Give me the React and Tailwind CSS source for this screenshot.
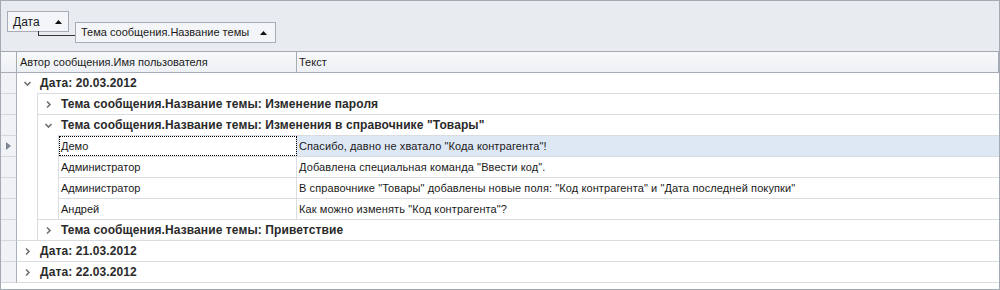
import React from 'react';

const tree = [
    {
        label: 'Дата: 20.03.2012',
        open: true,
        children: [
            { label: 'Тема сообщения.Название темы: Изменение пароля' },
            {
                label: 'Тема сообщения.Название темы: Изменения в справочнике "Товары"',
                open: true,
                rows: [
                    { author: 'Демо', text: 'Спасибо, давно не хватало "Кода контрагента"!', selected: true },
                    { author: 'Администратор', text: 'Добавлена специальная команда "Ввести код".' },
                    { author: 'Администратор', text: 'В справочнике "Товары" добавлены новые поля: "Код контрагента" и "Дата последней покупки"' },
                    { author: 'Андрей', text: 'Как можно изменять "Код контрагента"?' },
                ],
            },
            { label: 'Тема сообщения.Название темы: Приветствие' },
        ],
    },
    { label: 'Дата: 21.03.2012' },
    { label: 'Дата: 22.03.2012' },
];

const Chevron = ({ open }) => (
    <svg width="9" height="9" viewBox="0 0 9 9">
        {open ? (
            <path d="M1.5 3 L4.5 6 L7.5 3" fill="none" stroke="#707070" strokeWidth="1.6" />
        ) : (
            <path d="M3 1.5 L6 4.5 L3 7.5" fill="none" stroke="#707070" strokeWidth="1.6" />
        )}
    </svg>
);

const SortArrow = () => (
    <svg width="7" height="4" viewBox="0 0 7 4">
        <polygon points="0,4 3.5,0 7,4" fill="#111" />
    </svg>
);

const DataRow = ({ row, last }) => (
    <div className={last ? '' : 'border-b border-[#d9dce1]'}>
        <div className="flex h-[20px]">
            <div
                className={
                    'w-[238px] shrink-0 border-r border-[#d9dce1] pl-[2px] flex items-center ' +
                    (row.selected ? 'outline-1 outline-dotted outline-black -outline-offset-1' : '')
                }
            >
                {row.author}
            </div>
            <div className={'flex-1 pl-[2px] flex items-center tracking-[0.1px] ' + (row.selected ? 'bg-[#dee7f4]' : '')}>
                {row.text}
            </div>
        </div>
    </div>
);

const Group = ({ node, last }) => {
    const items = node.children || node.rows || [];
    return (
        <div className={last ? '' : 'border-b border-[#d9dce1]'}>
            <div className="flex h-[20px] items-center font-bold text-[12px] tracking-[0.1px] text-[#2a2a2a]">
                <span className="w-[21px] shrink-0 flex justify-center">
                    <Chevron open={node.open} />
                </span>
                <span className="pl-[2px]">{node.label}</span>
            </div>
            {node.open && (
                <div className="flex">
                    <div className="w-[21px] shrink-0 border-r border-[#d9dce1]" />
                    <div className="flex-1 border-t border-[#d9dce1]">
                        {node.children &&
                            node.children.map((c, i) => (
                                <Group key={i} node={c} last={i === items.length - 1} />
                            ))}
                        {node.rows &&
                            node.rows.map((r, i) => <DataRow key={i} row={r} last={i === items.length - 1} />)}
                    </div>
                </div>
            )}
        </div>
    );
};

export default function App() {
    const rowCount = 10;
    return (
        <div className="w-[1000px] h-[290px] bg-white border border-[#a3aab4] flex flex-col font-['Liberation_Sans',Arial,sans-serif] text-[11px] leading-none text-[#1a1a1a] overflow-hidden whitespace-nowrap">
            {/* group panel */}
            <div className="h-[51px] shrink-0 bg-[#e8ebf0] border-b border-[#a3aab4] flex items-start pt-[10px] pl-[6px]">
                <div className="relative h-[21px] w-[62px] border border-[#a6adb6] bg-[#f4f5f8] flex items-center justify-between pl-[5px] pr-[6px]">
                    <span className="text-[12px]">Дата</span>
                    <SortArrow />
                    <span className="absolute left-[30px] top-[19px] w-[37px] h-[5px] border-l border-b border-[#333]" />
                </div>
                <div className="relative mt-[11px] ml-[6px] h-[21px] w-[201px] border border-[#a6adb6] bg-[#f4f5f8] flex items-center justify-between pl-[5px] pr-[8px]">
                    <span>Тема сообщения.Название темы</span>
                    <SortArrow />
                </div>
            </div>

            {/* column header */}
            <div className="h-[21px] shrink-0 flex border-b border-[#a5acb5] bg-gradient-to-b from-[#f8f9fb] to-[#edf0f4]">
                <div className="w-[16px] shrink-0 border-r border-[#a5acb5]" />
                <div className="w-[280px] shrink-0 border-r border-[#a5acb5] pl-[3px] flex items-center">
                    Автор сообщения.Имя пользователя
                </div>
                <div className="flex-1 pl-[2px] flex items-center border-r border-[#a5acb5]">Текст</div>
            </div>

            {/* body */}
            <div className="flex">
                <div className="w-[16px] shrink-0 flex flex-col">
                    {Array.from({ length: rowCount }).map((_, i) => (
                        <div
                            key={i}
                            className="h-[21px] border-b border-r border-b-[#d5d8dd] border-r-[#a9b0b9] bg-[#f1f2f5] flex items-center pl-[5px]"
                        >
                            {i === 3 && (
                                <svg width="5" height="8" viewBox="0 0 5 8">
                                    <polygon points="0,0 5,4 0,8" fill="#7d8794" />
                                </svg>
                            )}
                        </div>
                    ))}
                </div>
                <div className="flex-1">
                    {tree.map((n, i) => (
                        <Group key={i} node={n} last={false} />
                    ))}
                </div>
            </div>
        </div>
    );
}
